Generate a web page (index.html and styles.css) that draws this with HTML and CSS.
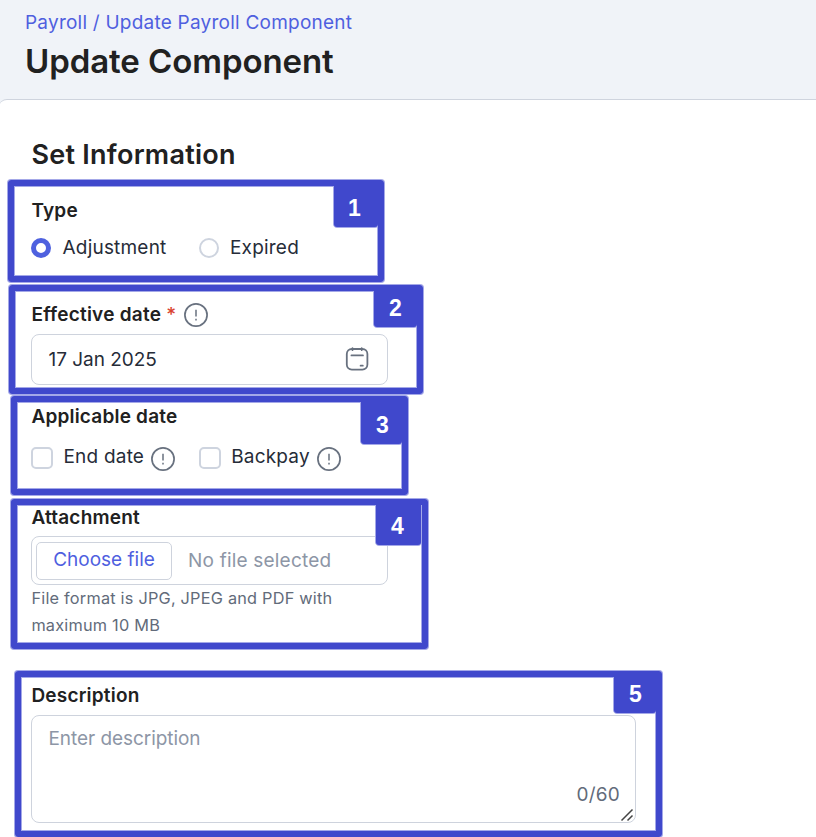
FILE: index.html
```html
<!DOCTYPE html>
<html lang="en">
<head>
<meta charset="utf-8">
<title>Update Component</title>
<link rel="stylesheet" href="styles.css">
</head>
<body>
<svg class="defs" width="0" height="0">
  <symbol id="info" viewBox="0 0 26 26">
    <circle cx="13" cy="13" r="11.1" fill="none" stroke="currentColor" stroke-width="1.7"/>
    <path d="M13 7.8v6.8M13 16.8v1.8" fill="none" stroke="currentColor" stroke-width="1.5"/>
  </symbol>
</svg>
<header class="page-header">
  <nav class="breadcrumb">Payroll / Update Payroll Component</nav>
  <h1 class="title">Update Component</h1>
</header>
<main class="card">
  <h2 class="heading">Set Information</h2>

  <section class="frame frame-type">
    <span class="badge">1</span>
    <div class="label">Type</div>
    <div class="options">
      <span class="option"><i class="radio radio-on"></i><span>Adjustment</span></span>
      <span class="option"><i class="radio"></i><span>Expired</span></span>
    </div>
  </section>

  <section class="frame frame-effective">
    <span class="badge">2</span>
    <div class="label label-row"><span>Effective date <b class="required">*</b></span><svg class="info"><use href="#info"/></svg></div>
    <div class="field date-field">
      <span class="date">17 Jan 2025</span>
      <svg class="calendar" viewBox="0 0 24 26" fill="none" stroke="#68717f" stroke-linecap="round">
        <rect x="1.8" y="3" width="20.6" height="20.6" rx="5" stroke-width="1.8"/>
        <path d="M7.5 2v2.2M16.7 2v2.2M6.4 9.4h11.6" stroke-width="1.7"/>
        <path d="M15.6 19.7h2.2" stroke-width="1.8"/>
      </svg>
    </div>
  </section>

  <section class="frame frame-applicable">
    <span class="badge">3</span>
    <div class="label">Applicable date</div>
    <div class="options">
      <span class="option"><i class="check"></i><span>End date</span><svg class="info"><use href="#info"/></svg></span>
      <span class="option"><i class="check"></i><span>Backpay</span><svg class="info"><use href="#info"/></svg></span>
    </div>
  </section>

  <section class="frame frame-attachment">
    <span class="badge">4</span>
    <div class="label">Attachment</div>
    <div class="field file-field">
      <span class="choose">Choose file</span>
      <span class="muted">No file selected</span>
    </div>
    <p class="help">File format is JPG, JPEG and PDF with<br>maximum 10 MB</p>
  </section>

  <section class="frame frame-description">
    <span class="badge">5</span>
    <div class="label">Description</div>
    <div class="field text-field">
      <span class="muted placeholder">Enter description</span>
      <span class="counter">0/60</span>
      <svg class="grip" viewBox="0 0 14 14" fill="none" stroke="#444" stroke-width="1.5"><path d="M1.5 12.5l11-11M7.5 12.5l5-5"/></svg>
    </div>
  </section>
</main>
</body>
</html>
```
FILE: styles.css
```css
* { box-sizing: border-box; }
html, body { height: 837px; overflow: hidden; }
body {
  margin: 0;
  background: #f0f3f8;
  color: #262c38;
  font: 19px/24px Inter, "Liberation Sans", sans-serif;
  letter-spacing: .2px;
}
.defs { position: absolute; }
.page-header { height: 99px; padding: 11px 25px 0; }
.breadcrumb { color: #4f5fdf; letter-spacing: .23px; }
.title {
  margin: 6px 0 0;
  font-size: 33px;
  line-height: 40px;
  font-weight: 600;
  color: #212121;
  letter-spacing: -.08px;
}
.card {
  height: 738px;
  margin-left: -1px;
  margin-right: -8px;
  padding-left: 1px;
  padding-top: 38px;
  border-top: 1px solid #cfd4de;
  border-radius: 8px 0 0 0;
  background: #fff;
}
.heading {
  margin: 0 0 9px 31.5px;
  font-size: 27px;
  line-height: 33px;
  font-weight: 600;
  color: #212121;
  letter-spacing: .25px;
}
.frame {
  position: relative;
  border: 6px solid #4048cc;
  border-radius: 3px;
  box-shadow: 0 0 0 1px #a4a8e8, inset 0 0 0 1px #a4a8e8;
}
.frame-type { width: 376px; height: 102px; margin-left: 8px; padding: 13px 0 0 17px; }
.frame-effective { width: 414px; height: 109px; margin: 3px 0 0 9px; padding: 12px 0 0 16px; }
.frame-applicable { width: 397px; height: 99px; margin: 2px 0 0 11px; padding: 3px 0 0 14px; }
.frame-attachment { width: 417px; height: 150px; margin: 4px 0 0 11px; padding: 1px 0 0 14px; }
.frame-description { width: 647px; height: 166px; margin: 22px 0 0 15px; padding: 7px 0 0 10px; }

.badge {
  position: absolute;
  top: 0;
  right: 0;
  border-radius: 0 0 3px 3px;
  background: #4048cc;
  box-shadow: 0 1px 0 #a4a8e8, -1px 0 0 #a4a8e8;
  color: #fff;
  font: bold 23px/42px "Liberation Sans", sans-serif;
  letter-spacing: 0;
  text-align: center;
}
.frame-type .badge { width: 44px; height: 41px; padding-right: 3px; line-height: 44px; }
.frame-effective .badge { width: 43px; height: 36px; line-height: 34px; }
.frame-applicable .badge { width: 41px; height: 42px; padding-left: 2px; line-height: 46px; }
.frame-attachment .badge { width: 45px; height: 40px; right: 1px; padding-right: 2px; line-height: 42px; }
.frame-description .badge { width: 42px; height: 36px; padding-left: 1px; line-height: 34px; }

.label { font-weight: 600; color: #212121; line-height: 24px; padding-left: .4px; }
.label-row { display: flex; align-items: center; gap: 6.5px; height: 24px; letter-spacing: .24px; }
.required { color: #d9432f; font-weight: 500; }
.info { width: 26px; height: 26px; color: #68717f; flex: none; }

.options { display: flex; align-items: center; }
.option { display: flex; align-items: center; }
.frame-type .options { margin-top: 13px; gap: 32px; }
.frame-type .option { gap: 11.5px; }
.radio { width: 20px; height: 20px; border: 2px solid #ced4df; border-radius: 50%; background: #fff; }
.radio-on { border: 5.5px solid #4e61df; }
.frame-applicable .options { margin-top: 13px; gap: 22.5px; }
.check { width: 22px; height: 22px; margin: 1px 10.5px 0 0; border: 2px solid #ced4df; border-radius: 5px; }
.frame-applicable .info { margin: 3px 0 0 6px; }
.frame-applicable .option { height: 30px; }

.field { border: 1px solid #ced3dd; border-radius: 8px; width: 357px; }
.date-field { display: flex; justify-content: space-between; height: 51px; margin-top: 7px; padding: 13px 17px 0 16.5px; }
.date { letter-spacing: -.02px; }
.calendar { width: 24px; height: 26px; margin: -2px 1px 0 0; }
.file-field { display: flex; align-items: center; gap: 16px; height: 49px; margin-top: 6px; padding-left: 4px; }
.choose { width: 136px; height: 38px; border: 1px solid #ced3dd; border-radius: 5px; color: #4f5fdf; line-height: 34px; letter-spacing: 0; text-align: center; }
.muted { color: #8d96a6; }
.help { margin: 0; padding-left: .4px; color: #626b7a; font-size: 16.3px; line-height: 27px; letter-spacing: .22px; }
.text-field { position: relative; display: flex; flex-direction: column; justify-content: space-between; width: 605px; height: 108px; margin-top: 7px; padding: 11px 15px 15px 16.5px; }
.placeholder { letter-spacing: -.06px; }
.counter { align-self: flex-end; color: #626b7a; }
.grip { position: absolute; right: 1px; bottom: 0; width: 14px; height: 14px; }
```
